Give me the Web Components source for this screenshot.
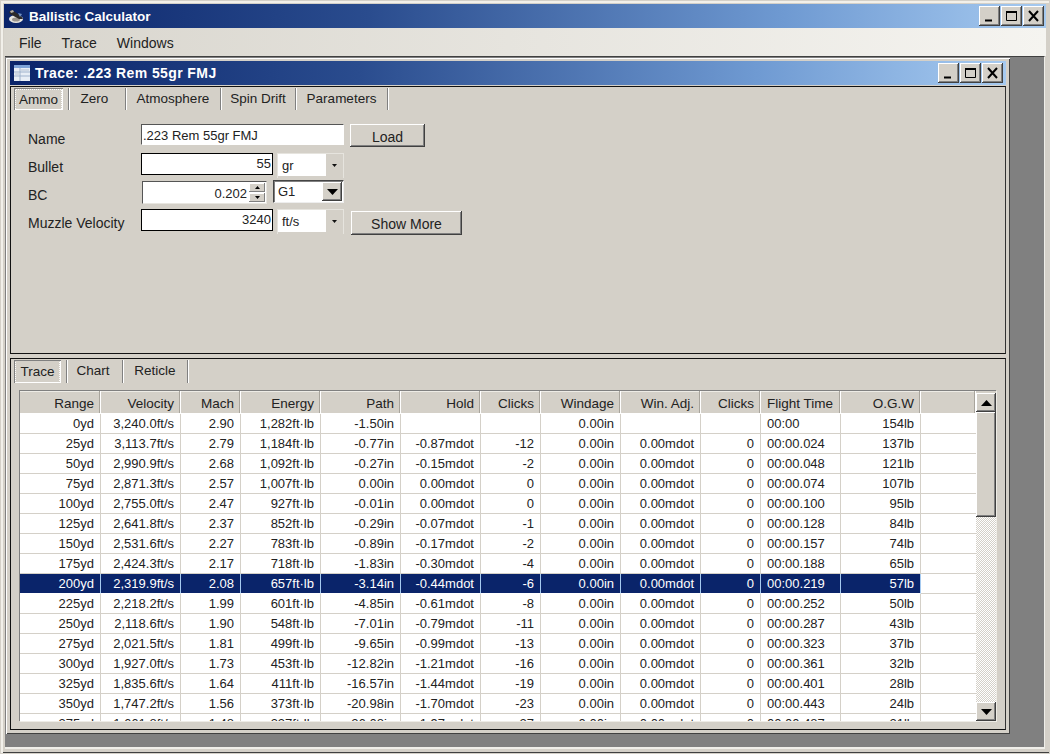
<!DOCTYPE html>
<html>
<head>
<meta charset="utf-8">
<title>Ballistic Calculator</title>
<style>
  html, body { margin: 0; height: 100%; overflow: hidden; background: #d4d0c8; }
  body { font: 13.5px "Liberation Sans", Arial, sans-serif; color: #111; }
</style>
</head>
<body>
<template id="app-icon">
  <svg width="16" height="16" viewBox="0 0 16 16">
    <ellipse cx="8" cy="11" rx="7" ry="4" fill="#e8e6e0"/>
    <ellipse cx="8" cy="11.5" rx="4" ry="2" fill="#9a948c"/>
    <path d="M1 4l3-2 9 6 2 3-4 0-9-5z" fill="#2c2a2a"/>
    <path d="M2 3l3-1 1 2-3 1z" fill="#b8b2a8"/>
    <path d="M10 5l4 1-2 3z" fill="#6f8fc0"/>
  </svg>
</template>
<template id="child-icon">
  <svg width="16" height="16" viewBox="0 0 16 16">
    <rect x="0" y="0" width="16" height="16" fill="#e8eef6"/>
    <rect x="0" y="0" width="16" height="3" fill="#7fa4d8"/>
    <path d="M0 7h16M0 11h16M6 3v13" stroke="#9fb2cc" stroke-width="1"/>
    <rect x="7" y="4" width="8" height="2" fill="#cfd8e4"/>
    <rect x="1" y="8" width="4" height="2" fill="#cfd8e4"/>
  </svg>
</template>

<app-window label="Ballistic Calculator">
  <menu-item>File</menu-item>
  <menu-item>Trace</menu-item>
  <menu-item>Windows</menu-item>

  <mdi-child slot="client" label="Trace: .223 Rem 55gr FMJ">
    <tab-panel fixed="268">
      <tab-strip slot="tabs">
        <tab-item selected w="49" gap="5">Ammo</tab-item>
        <tab-item lead pr="5" w="58">Zero</tab-item>
        <tab-item w="95">Atmosphere</tab-item>
        <tab-item w="75">Spin Drift</tab-item>
        <tab-item w="92">Parameters</tab-item>
      </tab-strip>
      <ammo-form></ammo-form>
    </tab-panel>
    <tab-panel>
      <tab-strip slot="tabs">
        <tab-item selected w="47" gap="5" tall>Trace</tab-item>
        <tab-item lead pr="3" w="57" tall>Chart</tab-item>
        <tab-item w="65" tall>Reticle</tab-item>
      </tab-strip>
      <trace-grid></trace-grid>
    </tab-panel>
  </mdi-child>
</app-window>

<script>
function shadow(el, html) {
  el.attachShadow({ mode: 'open' }).innerHTML = html;
  return el.shadowRoot;
}

const BEVEL_UP = 'box-shadow: inset -1px -1px 0 #404040, inset 1px 1px 0 #fff, inset -2px -2px 0 #808080;';

class WinButtons extends HTMLElement {
  connectedCallback() {
    shadow(this, `
      <style>
        :host { display: flex; gap: 1px; }
        .b { width: 21px; height: 20px; background: #d4d0c8; ${BEVEL_UP} display: flex; align-items: center; justify-content: center; }
      </style>
      <div class="b"><svg width="13" height="12" viewBox="0 0 13 12"><path d="M2 10.5h7" stroke="#000" stroke-width="2"/></svg></div>
      <div class="b"><svg width="13" height="12" viewBox="0 0 13 12" fill="none"><path d="M1.5 1.5h10v9h-10z" stroke="#000"/><path d="M1 2h11" stroke="#000" stroke-width="2"/></svg></div>
      <div class="b"><svg width="13" height="12" viewBox="0 0 13 12"><path d="M2 1l9 10M11 1l-9 10" stroke="#000" stroke-width="2"/></svg></div>`);
  }
}
customElements.define('win-buttons', WinButtons);

class TitleBar extends HTMLElement {
  connectedCallback() {
    const icon = document.getElementById(this.getAttribute('icon')).innerHTML;
    shadow(this, `
      <style>
        :host { display: flex; flex: none; align-items: center; height: 24px; padding-left: 4px; padding-right: var(--pr, 3px); gap: 5px;
          background: linear-gradient(90deg, #0a246a 0%, #2a4c8e 35%, #6f9ad2 75%, #a6caf0 100%);
          color: #fff; font: bold var(--fs, 14px) "Liberation Sans", Arial, sans-serif; letter-spacing: var(--ls, .4px); }
        span { flex: 1; white-space: nowrap; }
        svg { display: block; }
      </style>
      ${icon}<span>${this.getAttribute('label')}</span><win-buttons></win-buttons>`);
  }
}
customElements.define('title-bar', TitleBar);

class AppWindow extends HTMLElement {
  connectedCallback() {
    shadow(this, `
      <style>
        :host { display: flex; flex-direction: column; height: 754px; box-sizing: border-box; padding: 4px 4px 5px 4px;
          background: #d4d0c8; box-shadow: inset 0 0 0 1px #d4d0c8, inset 1px 1px 0 2px #f2f0ea, inset 0 -2px 0 0 #404040; }
        .menu { display: flex; flex: none; height: 28px; align-items: center; padding: 2px 0 0 5px; box-sizing: border-box;
          background: linear-gradient(90deg, #d8d5cd 0%, #f5f4f0 100%); }
        .client { flex: 1; min-height: 0; margin: 0 1px 0 1px; background: #808080; padding: 1px 34px 13px 1px;
          display: flex; border-top: 1px solid #404040; border-bottom: 2px solid #efeee9; border-right: 1px solid #efeee9; }
        title-bar { --pr: 2px; --fs: 13.5px; --ls: 0; }
      </style>
      <title-bar label="${this.getAttribute('label')}" icon="app-icon"></title-bar>
      <div class="menu"><slot></slot></div>
      <div class="client"><slot name="client"></slot></div>`);
  }
}

class MenuItem extends HTMLElement {
  connectedCallback() {
    shadow(this, `<style>:host { display: block; padding: 0 10px; font-size: 14px; color: #222; }</style><slot></slot>`);
  }
}
customElements.define('menu-item', MenuItem);

class MdiChild extends HTMLElement {
  connectedCallback() {
    this.style.flex = '1';
    shadow(this, `
      <style>
        :host { display: flex; flex-direction: column; box-sizing: border-box; padding: 3px 4px 4px 4px; background: #d4d0c8;
          box-shadow: inset 1px 1px 0 #fff, inset -1px -1px 0 #404040; }
        title-bar { margin-bottom: 1px; }
        .panels { flex: 1; min-height: 0; display: flex; flex-direction: column; gap: 4px; }
      </style>
      <title-bar label="${this.getAttribute('label')}" icon="child-icon"></title-bar>
      <div class="panels"><slot></slot></div>`);
  }
}
customElements.define('mdi-child', MdiChild);

class TabPanel extends HTMLElement {
  connectedCallback() {
    const fixed = this.getAttribute('fixed');
    shadow(this, `
      <style>
        :host { display: flex; flex-direction: column; box-sizing: border-box; border: 1px solid #111; border-right-color: #333;
          background: #d4d0c8; min-height: 0; ${fixed ? `height:${fixed}px;flex:none;` : 'flex:1;'} }
      </style>
      <slot name="tabs"></slot><slot></slot>`);
  }
}
customElements.define('tab-panel', TabPanel);

class TabStrip extends HTMLElement {
  connectedCallback() {
    shadow(this, `<style>:host { display: flex; padding: 1px 0 0 3px; }</style><slot></slot>`);
  }
}
customElements.define('tab-strip', TabStrip);

class TabItem extends HTMLElement {
  connectedCallback() {
    const sel = this.hasAttribute('selected');
    const lead = this.hasAttribute('lead');
    const tall = this.hasAttribute('tall');
    shadow(this, `
      <style>
        :host { display: flex; align-items: center; justify-content: center; box-sizing: border-box; height: ${tall ? 23 : 22}px;
          width: ${this.getAttribute('w')}px; margin-right: ${this.getAttribute('gap') || 0}px; font-size: 13.5px; color: #222;
          ${sel ? `padding-top: ${tall ? 0 : 1}px; background: repeating-conic-gradient(#fff 0 25%, #d4d0c8 0 50%) 0 0 / 2px 2px;
            box-shadow: inset 1px 1px 0 #808080, inset -1px -1px 0 #fff;`
                : `padding-bottom: 2px; border-right: 1px solid #808080;
                   ${lead ? 'border-left: 1px solid #808080; box-shadow: 1px 0 0 #fff, inset 1px 0 0 #fff;' : 'box-shadow: 1px 0 0 #fff;'}
                   padding-right: ${this.getAttribute('pr') || 0}px;`} }
        .t { background: #d4d0c8; padding: 1px 1px; ${sel ? 'margin: 2px;' : ''} display:${sel ? 'flex' : 'block'}; ${sel ? 'width:calc(100% - 4px);height:calc(100% - 4px);align-items:center;justify-content:center;' : ''} }
      </style>
      <div class="t"><slot></slot></div>`);
  }
}
customElements.define('tab-item', TabItem);

class WinInput extends HTMLElement {
  connectedCallback() {
    const w = this.getAttribute('w'), h = +(this.getAttribute('h') || 22);
    const soft = this.hasAttribute('soft');
    shadow(this, `
      <style>
        :host { display: block; box-sizing: border-box; width: ${w}px; height: ${h}px; background: #fff; line-height: ${soft ? h + 1 : h - 2}px;
          padding: 0 1px; font-size: 13px; text-align: ${this.getAttribute('align') || 'right'}; white-space: nowrap; color: #222;
          border: 1px solid #000; ${soft ? 'border-right-color:#fff;border-bottom-color:#fff;border-top-color:#555;border-left-color:#555;' : ''} }
      </style><slot></slot>`);
  }
}
customElements.define('win-input', WinInput);

class WinSpin extends HTMLElement {
  connectedCallback() {
    const arrow = (d) => `<div class="s"><svg width="5" height="3" viewBox="0 0 5 3"><path d="${d}" fill="#000"/></svg></div>`;
    shadow(this, `
      <style>
        :host { display: flex; box-sizing: border-box; width: 125px; height: 23px; background: #fff;
          border: 1px solid #555; border-right-color: #e8e6e0; border-bottom-color: #e8e6e0; margin-left: 1px; }
        .v { flex: 1; text-align: right; line-height: 23px; padding-right: 2px; color: #222; font-size: 13px; }
        .col { display: flex; flex-direction: column; width: 16px; margin: 1px 1px 1px 0; gap: 1px; }
        .s { flex: 1; background: #d4d0c8; display: flex; align-items: center; justify-content: center;
          box-shadow: inset -1px -1px 0 #808080, inset 1px 1px 0 #fff; }
      </style>
      <div class="v"><slot></slot></div>
      <div class="col">${arrow('M2.5 0l2.5 3h-5z')}${arrow('M0 0h5l-2.5 3z')}</div>`);
  }
}
customElements.define('win-spin', WinSpin);

class FlatSelect extends HTMLElement {
  connectedCallback() {
    shadow(this, `
      <style>
        :host { display: flex; box-sizing: border-box; width: 67px; height: 25px; margin-left: 4px; border: 1px solid #e6e4de; border-bottom: 0; }
        .v { width: 48px; height: 22px; background: #fff; padding-left: 4px; box-sizing: border-box; line-height: 24px; color: #222; font-size: 13px; }
        .a { flex: 1; display: flex; justify-content: center; padding-top: 10px; }
      </style>
      <div class="v"><slot></slot></div>
      <div class="a"><svg width="5" height="3" viewBox="0 0 5 3"><path d="M0 0h5l-2.5 3z" fill="#111"/></svg></div>`);
  }
}
customElements.define('flat-select', FlatSelect);

class ComboBox extends HTMLElement {
  connectedCallback() {
    shadow(this, `
      <style>
        :host { display: flex; box-sizing: border-box; width: 71px; height: 23px; margin: -1px 0 0 6px; background: #fff;
          border: 1px solid #444; border-right-color: #eee; border-bottom-color: #eee; box-shadow: inset 1px 1px 0 #808080; }
        .v { flex: 1; padding-left: 4px; line-height: 21px; color: #222; font-size: 13px; }
        .a { width: 20px; margin: 1px; background: #d4d0c8; display: flex; align-items: center; justify-content: center; ${BEVEL_UP} }
      </style>
      <div class="v"><slot></slot></div>
      <div class="a"><svg width="11" height="6" viewBox="0 0 11 6"><path d="M0 0h11l-5.5 6z" fill="#000"/></svg></div>`);
  }
}
customElements.define('combo-box', ComboBox);

class WinButton extends HTMLElement {
  connectedCallback() {
    shadow(this, `
      <style>
        :host { display: flex; align-items: center; justify-content: center; box-sizing: border-box; height: ${this.getAttribute('h') || 23}px;
          width: ${this.getAttribute('w')}px; margin: ${this.getAttribute('m') || '0 0 0 6px'}; background: #d4d0c8; padding-top: ${this.getAttribute('pt') || 3}px; color: #222; font-size: 14px; ${BEVEL_UP} }
      </style><slot></slot>`);
  }
}
customElements.define('win-button', WinButton);

class AmmoForm extends HTMLElement {
  connectedCallback() {
    shadow(this, `
      <style>
        :host { display: grid; grid-template-columns: 113px 1fr; grid-template-rows: 29px 28px 28px 28px; padding: 14px 0 0 17px; color: #222; }
        label { line-height: 29px; align-self: start; font-size: 14px; }
        .r { display: flex; align-items: flex-start; }
      </style>
      <label style="line-height:31px">Name</label>
      <div class="r"><win-input soft w="203" h="21" align="left">.223 Rem 55gr FMJ</win-input><win-button w="75">Load</win-button></div>
      <label>Bullet</label>
      <div class="r"><win-input w="132">55</win-input><flat-select>gr</flat-select></div>
      <label>BC</label>
      <div class="r"><win-spin>0.202</win-spin><combo-box>G1</combo-box></div>
      <label>Muzzle Velocity</label>
      <div class="r"><win-input w="132">3240</win-input><flat-select>ft/s</flat-select><win-button w="111" h="24" pt="1" m="2px 0 0 7px">Show More</win-button></div>`);
  }
}
customElements.define('ammo-form', AmmoForm);

const COLS = [
  ['Range', 81], ['Velocity', 80], ['Mach', 60], ['Energy', 80], ['Path', 80], ['Hold', 80],
  ['Clicks', 60], ['Windage', 80], ['Win. Adj.', 80], ['Clicks', 60], ['Flight Time', 80, 'left'], ['O.G.W', 80],
];
const ROWS = [
  ['0yd','3,240.0ft/s','2.90','1,282ft·lb','-1.50in','','','0.00in','','','00:00','154lb'],
  ['25yd','3,113.7ft/s','2.79','1,184ft·lb','-0.77in','-0.87mdot','-12','0.00in','0.00mdot','0','00:00.024','137lb'],
  ['50yd','2,990.9ft/s','2.68','1,092ft·lb','-0.27in','-0.15mdot','-2','0.00in','0.00mdot','0','00:00.048','121lb'],
  ['75yd','2,871.3ft/s','2.57','1,007ft·lb','0.00in','0.00mdot','0','0.00in','0.00mdot','0','00:00.074','107lb'],
  ['100yd','2,755.0ft/s','2.47','927ft·lb','-0.01in','0.00mdot','0','0.00in','0.00mdot','0','00:00.100','95lb'],
  ['125yd','2,641.8ft/s','2.37','852ft·lb','-0.29in','-0.07mdot','-1','0.00in','0.00mdot','0','00:00.128','84lb'],
  ['150yd','2,531.6ft/s','2.27','783ft·lb','-0.89in','-0.17mdot','-2','0.00in','0.00mdot','0','00:00.157','74lb'],
  ['175yd','2,424.3ft/s','2.17','718ft·lb','-1.83in','-0.30mdot','-4','0.00in','0.00mdot','0','00:00.188','65lb'],
  ['200yd','2,319.9ft/s','2.08','657ft·lb','-3.14in','-0.44mdot','-6','0.00in','0.00mdot','0','00:00.219','57lb'],
  ['225yd','2,218.2ft/s','1.99','601ft·lb','-4.85in','-0.61mdot','-8','0.00in','0.00mdot','0','00:00.252','50lb'],
  ['250yd','2,118.6ft/s','1.90','548ft·lb','-7.01in','-0.79mdot','-11','0.00in','0.00mdot','0','00:00.287','43lb'],
  ['275yd','2,021.5ft/s','1.81','499ft·lb','-9.65in','-0.99mdot','-13','0.00in','0.00mdot','0','00:00.323','37lb'],
  ['300yd','1,927.0ft/s','1.73','453ft·lb','-12.82in','-1.21mdot','-16','0.00in','0.00mdot','0','00:00.361','32lb'],
  ['325yd','1,835.6ft/s','1.64','411ft·lb','-16.57in','-1.44mdot','-19','0.00in','0.00mdot','0','00:00.401','28lb'],
  ['350yd','1,747.2ft/s','1.56','373ft·lb','-20.98in','-1.70mdot','-23','0.00in','0.00mdot','0','00:00.443','24lb'],
  ['375yd','1,661.8ft/s','1.48','337ft·lb','-26.08in','-1.97mdot','-27','0.00in','0.00mdot','0','00:00.487','21lb'],
];
const SELECTED = 8;

class TraceGrid extends HTMLElement {
  connectedCallback() {
    const tpl = COLS.map(c => c[1] + 'px').join(' ') + ' 1fr';
    const head = COLS.map(c => `<div class="h ${c[2] || ''}">${c[0]}</div>`).join('') + '<div class="h"></div>';
    const body = ROWS.map((r, i) => {
      const sel = i === SELECTED ? ' sel' : '';
      return r.map((v, j) => `<div class="c${sel} ${COLS[j][2] || ''}">${v}</div>`).join('') + '<div class="c fill"></div>';
    }).join('');
    const arrow = (d) => `<svg width="11" height="6" viewBox="0 0 11 6"><path d="${d}" fill="#000"/></svg>`;
    shadow(this, `
      <style>
        :host { flex: 1; display: flex; min-height: 0; box-sizing: border-box; margin: 7px 9px 8px 8px; color: #222; font-size: 13px;
          border-top: 1px solid #808080; border-left: 1px solid #808080; box-shadow: 1px 1px 0 #eeece6; }
        .view { flex: 1; min-width: 0; overflow: hidden; }
        .grid { display: grid; grid-template-columns: ${tpl}; grid-template-rows: 23px; grid-auto-rows: 20px; background: #fff; }
        .h { box-sizing: border-box; background: #d4d0c8; text-align: right; padding: 2px 6px 0 0; line-height: 21px; font-size: 13.5px;
          border-right: 1px solid #fff; border-bottom: 1px solid #fff; box-shadow: inset -1px 0 0 #a8a49c, inset 0 1px 0 #eeece6; }
        .c { box-sizing: border-box; height: 20px; text-align: right; padding-right: 6px; line-height: 19px; white-space: nowrap; overflow: hidden;
          border-right: 1px solid #d4d0c8; border-bottom: 1px solid #d4d0c8; background: #fff; }
        .left { text-align: left; padding: 0 0 0 6px; }
        .h.left { padding: 2px 0 0 6px; }
        .sel { background: #0a246a; color: #fff; border-right-color: #a6caf0; border-bottom-color: #fff; }
        .fill { border-right: 0; }
        .sb { width: 20px; flex: none; display: flex; flex-direction: column; padding-top: 2px; box-sizing: border-box;
          background: #d4d0c8; }
        .btn { height: 19px; flex: none; background: #d4d0c8; display: flex; align-items: center; justify-content: center; ${BEVEL_UP} }
        .thumb { height: 105px; flex: none; background: #d4d0c8; ${BEVEL_UP} }
        .track { flex: 1; background: repeating-conic-gradient(#fff 0 25%, #d4d0c8 0 50%) 0 0 / 2px 2px; }
      </style>
      <div class="view"><div class="grid">${head}${body}</div></div>
      <div class="sb">
        <div class="btn">${arrow('M5.5 0l5.5 6h-11z')}</div>
        <div class="thumb"></div>
        <div class="track"></div>
        <div class="btn">${arrow('M0 0h11l-5.5 6z')}</div>
      </div>`);
  }
}
customElements.define('trace-grid', TraceGrid);

customElements.define('app-window', AppWindow);
</script>
</body>
</html>
